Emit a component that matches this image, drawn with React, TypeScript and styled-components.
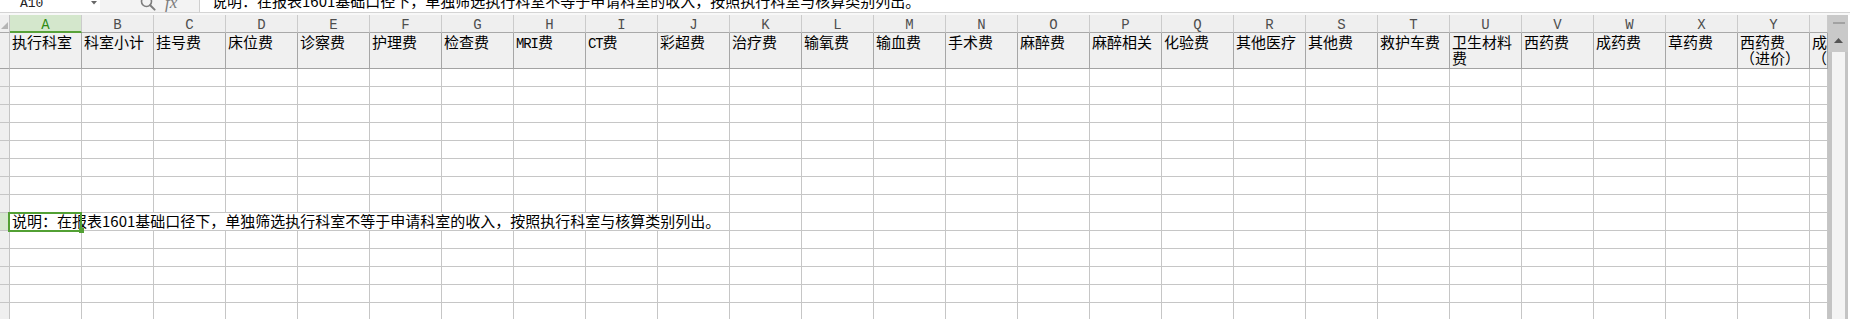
import React from "react";
import styled, { createGlobalStyle } from "styled-components";

const GlobalStyle = createGlobalStyle`
  html, body { margin: 0; padding: 0; background: #fff; overflow: hidden; }
  body { font-family: "Noto Sans CJK SC", "Noto Sans", sans-serif; }
`;

const LETTERS = "ABCDEFGHIJKLMNOPQRSTUVWXYZ".split("");

const HEADERS = [
  "执行科室", "科室小计", "挂号费", "床位费", "诊察费", "护理费", "检查费", "MRI费", "CT费",
  "彩超费", "治疗费", "输氧费", "输血费", "手术费", "麻醉费", "麻醉相关", "化验费", "其他医疗",
  "其他费", "救护车费", "卫生材料\n费", "西药费", "成药费", "草药费", "西药费\n（进价）", "成药费\n（进价）",
];

const NOTE = "说明：在报表1601基础口径下，单独筛选执行科室不等于申请科室的收入，按照执行科室与核算类别列出。";

const BODY_ROWS = [2, 3, 4, 5, 6, 7, 8, 9, 10, 11, 12, 13, 14, 15];
const SELECTED_ROW = 10;
const NOTE_SPAN = 10;

const Page = styled.div`
  width: 1850px;
  height: 319px;
  overflow: hidden;
  display: flex;
  flex-direction: column;
  background: #fff;
  font-family: "Noto Sans CJK SC", "Noto Sans", sans-serif;
  color: #000;
`;

const FormulaBar = styled.div`
  height: 13px;
  flex: none;
  display: flex;
  box-sizing: border-box;
  border-bottom: 1px solid #d4d4d4;
  overflow: hidden;
  background: #f3f3f3;
`;

const NameBox = styled.div`
  width: 100px;
  flex: none;
  display: flex;
  justify-content: space-between;
  box-sizing: border-box;
  padding: 0 3px 0 20px;
  background: #fff;
`;

const NameText = styled.span`
  align-self: flex-end;
  font-family: "Liberation Mono", monospace;
  font-size: 13px;
  line-height: 13px;
  padding-bottom: 2px;
  color: #222;
`;

const DropArrow = styled.svg`
  align-self: flex-start;
  margin-top: 1px;
`;

const Tools = styled.div`
  width: 99px;
  flex: none;
  display: flex;
  align-items: flex-end;
  box-sizing: border-box;
  padding: 0 0 1px 40px;
  gap: 9px;
`;

const Fx = styled.span`
  font-family: "Liberation Serif", serif;
  font-style: italic;
  font-size: 17px;
  line-height: 14px;
  color: #7a7a7a;
  padding-bottom: 1px;
`;

const FormulaInput = styled.div`
  flex: 1;
  display: flex;
  align-items: flex-end;
  border-left: 1px solid #cfcfcf;
  background: #fff;
  padding-left: 12px;
  overflow: hidden;
`;

const FormulaText = styled.span`
  font-size: 15px;
  line-height: 15px;
  padding-bottom: 4px;
  white-space: nowrap;
`;

const Strip = styled.div`
  height: 2px;
  flex: none;
  background: #f8f8f8;
`;

const Work = styled.div`
  flex: 1;
  min-height: 0;
  display: flex;
`;

const Sheet = styled.div`
  width: 1828px;
  flex: none;
  display: grid;
  grid-template-columns: 10px repeat(25, 72px) 18px;
  grid-template-rows: 18px 36px repeat(14, 18px);
  overflow: hidden;
`;

const Corner = styled.div`
  box-sizing: border-box;
  background: #efefef;
  border-right: 1px solid #c4c4c4;
  border-bottom: 1px solid #a9a9a9;
  display: flex;
  align-items: flex-end;
  justify-content: flex-end;
  padding: 0 1px 3px 0;
`;

const ColHead = styled.div<{ $active?: boolean }>`
  box-sizing: border-box;
  overflow: hidden;
  background: ${(p) => (p.$active ? "#d4e7cc" : "#efefef")};
  border-right: 1px solid #cbcbcb;
  border-bottom: ${(p) => (p.$active ? "2px solid #58a23a" : "1px solid #a9a9a9")};
  color: ${(p) => (p.$active ? "#2f8a14" : "#4d4d4d")};
  font-family: "Liberation Mono", monospace;
  font-size: 14px;
  line-height: 14px;
  padding-top: 3px;
`;

const ColLetter = styled.span`
  display: block;
  width: 71px;
  text-align: center;
`;

const RowHead = styled.div<{ $active?: boolean; $strong?: boolean }>`
  box-sizing: border-box;
  background: ${(p) => (p.$active ? "#d6e8d0" : "#efefef")};
  border-right: 1px solid #c4c4c4;
  border-bottom: 1px solid ${(p) => (p.$strong ? "#a3a3a3" : "#c6c6c6")};
`;

const HeadCell = styled.div`
  box-sizing: border-box;
  overflow: hidden;
  background: #f0f0f0;
  border-right: 1px solid #a6a6a6;
  border-bottom: 1px solid #a3a3a3;
  font-size: 15px;
  line-height: 16px;
  padding: 1px 0 0 2px;
`;

const HeadText = styled.span`
  display: block;
  width: 68px;
  white-space: nowrap;
`;

const Latin = styled.span`
  font-family: "Liberation Mono", monospace;
  font-size: 14px;
  letter-spacing: -1.1px;
`;

const Cell = styled.div`
  box-sizing: border-box;
  background: #fff;
  border-right: 1px solid #c6c6c6;
  border-bottom: 1px solid #c6c6c6;
`;

const NoteCell = styled.div<{ $span: number }>`
  grid-column: span ${(p) => p.$span};
  position: relative;
  box-sizing: border-box;
  background: #fff;
  border-right: 1px solid #c6c6c6;
  border-bottom: 1px solid #c6c6c6;
  padding-left: 2px;
  font-size: 15px;
  line-height: 16px;
  white-space: nowrap;
`;

const Selection = styled.div`
  position: absolute;
  left: -2px;
  top: -1px;
  width: 74px;
  height: 20px;
  box-sizing: border-box;
  border: 2px solid #52a034;
  z-index: 2;
  pointer-events: none;
`;

const FillHandle = styled.div`
  position: absolute;
  left: 69px;
  top: 15px;
  width: 5px;
  height: 5px;
  background: #52a034;
  z-index: 3;
`;

const VScroll = styled.div`
  width: 22px;
  flex: none;
  display: flex;
  flex-direction: column;
  box-sizing: border-box;
  padding-right: 2px;
  background: #fff;
`;

const ScrollHead = styled.div`
  height: 37px;
  flex: none;
  display: flex;
  flex-direction: column;
  align-items: center;
  background: #c9c9c9;
  padding-left: 1px;
`;

const Splitter = styled.div`
  width: 12px;
  height: 2px;
  margin-top: 7px;
  background: #a2a2a2;
`;

const UpArrow = styled.svg`
  margin-top: 14px;
`;

const Track = styled.div`
  flex: 1;
  box-sizing: border-box;
  border-left: 4px solid #c4c4c4;
  border-right: 3px solid #c4c4c4;
  background: #f4f4f4;
`;

function renderHeader(text: string) {
  const lines = text.split("\n");
  return lines.map((line, li) => (
    <React.Fragment key={li}>
      {li > 0 && <br />}
      {line.split(/([A-Za-z]+)/).map((part, pi) =>
        /^[A-Za-z]+$/.test(part) ? <Latin key={pi}>{part}</Latin> : <React.Fragment key={pi}>{part}</React.Fragment>
      )}
    </React.Fragment>
  ));
}

function Magnifier() {
  return (
    <svg width="16" height="16" viewBox="0 0 16 16" style={{ flex: "none" }}>
      <circle cx="6.5" cy="6.5" r="5" fill="none" stroke="#7d7d7d" strokeWidth="1.6" />
      <line x1="10.2" y1="10.2" x2="14.6" y2="14.6" stroke="#7d7d7d" strokeWidth="2" strokeLinecap="round" />
    </svg>
  );
}

export default function App() {
  return (
    <>
      <GlobalStyle />
      <Page>
        <FormulaBar>
          <NameBox>
            <NameText>A10</NameText>
            <DropArrow width="6" height="4" viewBox="0 0 6 4">
              <polygon points="0,0 6,0 3,3.5" fill="#666" />
            </DropArrow>
          </NameBox>
          <Tools>
            <Magnifier />
            <Fx>fx</Fx>
          </Tools>
          <FormulaInput>
            <FormulaText>{NOTE}</FormulaText>
          </FormulaInput>
        </FormulaBar>
        <Strip />
        <Work>
          <Sheet>
            <Corner>
              <svg width="7" height="7" viewBox="0 0 7 7">
                <polygon points="7,0 7,7 0,7" fill="#b5b5b5" />
              </svg>
            </Corner>
            {LETTERS.map((l, i) => (
              <ColHead key={l} $active={i === 0}>
                <ColLetter>{l}</ColLetter>
              </ColHead>
            ))}

            <RowHead $strong />
            {HEADERS.map((h, i) => (
              <HeadCell key={i}>
                <HeadText>{renderHeader(h)}</HeadText>
              </HeadCell>
            ))}

            {BODY_ROWS.map((r) =>
              r === SELECTED_ROW ? (
                <React.Fragment key={r}>
                  <RowHead $active />
                  <NoteCell $span={NOTE_SPAN}>
                    {NOTE}
                    <Selection />
                    <FillHandle />
                  </NoteCell>
                  {LETTERS.slice(NOTE_SPAN).map((l) => (
                    <Cell key={l} />
                  ))}
                </React.Fragment>
              ) : (
                <React.Fragment key={r}>
                  <RowHead />
                  {LETTERS.map((l) => (
                    <Cell key={l} />
                  ))}
                </React.Fragment>
              )
            )}
          </Sheet>
          <VScroll>
            <ScrollHead>
              <Splitter />
              <UpArrow width="9" height="5" viewBox="0 0 9 5">
                <polygon points="4.5,0 9,5 0,5" fill="#555" />
              </UpArrow>
            </ScrollHead>
            <Track />
          </VScroll>
        </Work>
      </Page>
    </>
  );
}
